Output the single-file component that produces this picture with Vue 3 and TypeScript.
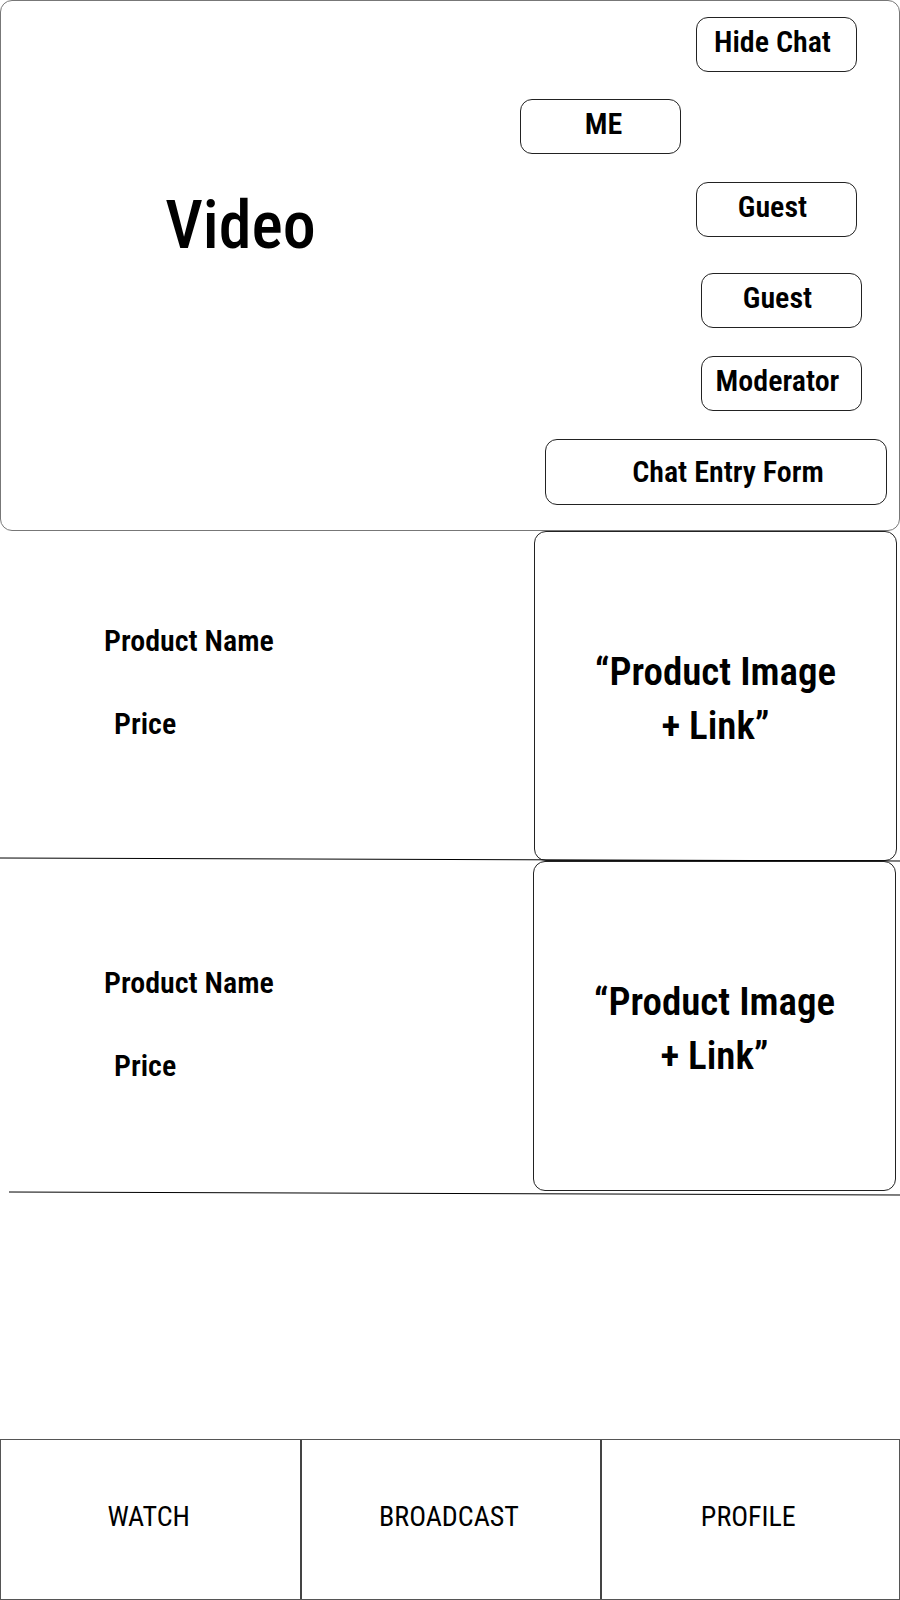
<script setup lang="ts">
import { ref } from 'vue'

interface Message {
  id: number
  author: string
  placement: 'mine' | 'theirs' | 'inset'
}

interface Product {
  id: number
  name: string
  price: string
  lineStart: number
}

const messages: Message[] = [
  { id: 1, author: 'ME', placement: 'mine' },
  { id: 2, author: 'Guest', placement: 'theirs' },
  { id: 3, author: 'Guest', placement: 'inset' },
  { id: 4, author: 'Moderator', placement: 'inset' },
]

const products: Product[] = [
  { id: 1, name: 'Product Name', price: 'Price', lineStart: 0 },
  { id: 2, name: 'Product Name', price: 'Price', lineStart: 9 },
]

const tabs: string[] = ['WATCH', 'BROADCAST', 'PROFILE']

const draft = ref('')
</script>

<template>
  <div class="page">
    <section class="stage">
      <h1 class="video">Video</h1>
      <div class="chat">
        <button class="bubble toggle" type="button">Hide Chat</button>
        <ul class="messages">
          <li v-for="m in messages" :key="m.id" class="bubble" :class="m.placement">{{ m.author }}</li>
        </ul>
        <form class="entry" @submit.prevent>
          <input v-model="draft" class="field" type="text" aria-label="Chat Entry Form" placeholder="Chat Entry Form" />
        </form>
      </div>
    </section>

    <main class="products">
      <article v-for="p in products" :key="p.id" class="product">
        <div class="info">
          <h2 class="name">{{ p.name }}</h2>
          <p class="price">{{ p.price }}</p>
        </div>
        <a class="picture" href="#">“Product Image<br />+ Link”</a>
        <svg class="rule" viewBox="0 0 900 5" preserveAspectRatio="none" aria-hidden="true">
          <line :x1="p.lineStart" y1="1" x2="900" y2="4" stroke="#000" stroke-width="1" />
        </svg>
      </article>
    </main>

    <nav class="tabs">
      <a v-for="tab in tabs" :key="tab" class="tab" href="#">{{ tab }}</a>
    </nav>
  </div>
</template>

<style>
body {
  margin: 0;
  background: #fff;
}
</style>

<style scoped>
.page {
  display: flex;
  flex-direction: column;
  min-height: 100vh;
  color: #000;
  font-family: "Roboto Condensed", "Liberation Sans Narrow", "Liberation Sans", sans-serif;
  font-size: 30px;
  font-weight: 600;
  line-height: 40px;
}

.stage {
  display: grid;
  grid-template-columns: 8fr 7fr;
  box-sizing: border-box;
  min-height: 531px;
  border: 1px solid #777;
  border-radius: 12px;
}

.video {
  margin: 0;
  padding-bottom: 80px;
  align-self: center;
  text-align: center;
  font-size: 66px;
  font-weight: 500;
  line-height: 80px;
}

.chat {
  display: flex;
  flex-direction: column;
  align-items: flex-end;
  padding: 16px 12px 0 0;
}

.bubble {
  display: flex;
  align-items: center;
  justify-content: center;
  box-sizing: border-box;
  width: 161px;
  height: 55px;
  padding: 0 8px 6px 0;
  border: 1px solid #222;
  border-radius: 12px;
  background: #fff;
  color: inherit;
  font: inherit;
}

.toggle {
  margin-right: 30px;
}

.messages {
  display: flex;
  flex-direction: column;
  align-items: flex-end;
  gap: 28px;
  margin: 27px 0 0;
  padding: 0;
  list-style: none;
}

.mine {
  margin-right: 206px;
  padding: 0 0 6px 6px;
}

.theirs {
  margin: 0 30px 8px 0;
}

.inset {
  margin-right: 25px;
}

.entry {
  width: 84%;
  margin-top: 28px;
}

.field {
  box-sizing: border-box;
  width: 100%;
  height: 66px;
  padding: 0 0 2px 24px;
  border: 1px solid #222;
  border-radius: 12px;
  background: #fff;
  color: inherit;
  font: inherit;
  text-align: center;
}

.field::placeholder {
  color: #000;
  opacity: 1;
}

.product {
  position: relative;
  display: flex;
  justify-content: space-between;
  min-height: 330px;
  padding-right: 3px;
}

.product:last-child {
  padding-right: 4px;
  padding-bottom: 4px;
}

.info {
  padding: 90px 0 0 104px;
}

.product:last-child .info {
  padding-top: 102px;
}

.name,
.price {
  margin: 0;
  font-size: 30px;
  font-weight: 600;
  line-height: 40px;
}

.price {
  margin: 43px 0 0 10px;
}

.picture {
  display: flex;
  align-items: center;
  justify-content: center;
  box-sizing: border-box;
  width: 363px;
  padding-top: 6px;
  border: 1px solid #222;
  border-radius: 12px;
  color: inherit;
  font-size: 39px;
  line-height: 54px;
  text-align: center;
  text-decoration: none;
}

.rule {
  position: absolute;
  left: 0;
  bottom: -1px;
  width: 100%;
  height: 5px;
}

.tabs {
  display: grid;
  grid-template-columns: repeat(3, 1fr);
  margin-top: auto;
  border: 1px solid #555;
}

.tab {
  display: flex;
  align-items: center;
  justify-content: center;
  box-sizing: border-box;
  min-height: 159px;
  padding: 0 4px 6px 0;
  color: inherit;
  font-size: 28px;
  font-weight: 400;
  text-decoration: none;
}

.tab + .tab {
  border-left: 2px solid #444;
}
</style>
